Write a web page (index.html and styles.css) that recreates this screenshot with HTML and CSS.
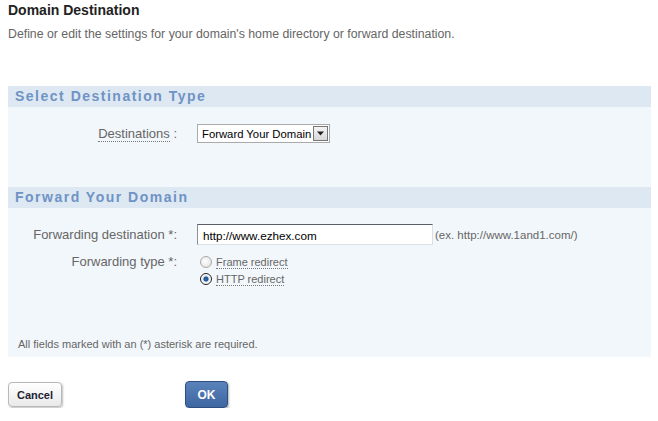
FILE: index.html
```html
<!DOCTYPE html>
<html lang="en">
<head>
    <meta charset="UTF-8">
    <title>Domain Destination</title>
    <link rel="stylesheet" href="styles.css">
</head>
<body>
    <h1 class="title">Domain Destination</h1>
    <p class="intro">Define or edit the settings for your domain's home directory or forward destination.</p>

    <div class="panel">
        <h2 class="band">Select Destination Type</h2>
        <div class="section sec-type">
            <div class="row">
                <label class="lbl"><span class="dotted">Destinations</span> :</label>
                <div class="field">
                    <span class="select">
                        <span class="select-text">Forward Your Domain</span>
                        <span class="select-btn"><svg width="9" height="5" viewBox="0 0 9 5"><path d="M1 0.5h7L4.5 4.5z" fill="#222"/></svg></span>
                    </span>
                </div>
            </div>
        </div>

        <h2 class="band">Forward Your Domain</h2>
        <div class="section sec-forward">
            <div class="row">
                <label class="lbl">Forwarding destination *:</label>
                <div class="field">
                    <input class="text" type="text" value="http://www.ezhex.com">
                    <span class="hint">(ex. http://www.1and1.com/)</span>
                </div>
            </div>
            <div class="row row-radio">
                <label class="lbl">Forwarding type *:</label>
                <div class="field radios">
                    <div class="radio"><span class="dot"></span><span class="dotted">Frame redirect</span></div>
                    <div class="radio"><span class="dot on"></span><span class="dotted">HTTP redirect</span></div>
                </div>
            </div>
        </div>
        <p class="note">All fields marked with an (*) asterisk are required.</p>
    </div>

    <div class="actions">
        <button class="btn cancel">Cancel</button>
        <button class="btn ok">OK</button>
    </div>
</body>
</html>
```

FILE: styles.css
```css
body {
    margin: 0;
    padding: 0 7px 0 8px;
    font-family: "Liberation Sans", Arial, sans-serif;
    color: #555;
    background: #fff;
}
.title {
    margin: 0;
    padding-top: 2px;
    font-size: 14px;
    line-height: 17px;
    color: #222;
}
.intro {
    margin: 8px 0 0;
    font-size: 12.3px;
    line-height: 15px;
    color: #666;
}
.panel {
    margin-top: 44px;
    background: #f2f7fb;
}
.band {
    margin: 0;
    height: 21px;
    padding-left: 7px;
    background: #dde8f2;
    font-size: 14px;
    line-height: 21px;
    font-weight: bold;
    letter-spacing: 1.5px;
    color: #6f93c4;
}
.section {
    padding-top: 17px;
}
.sec-type {
    height: 63px;
}
.sec-forward {
    padding-top: 16px;
    height: 114px;
}
.row {
    display: flex;
    align-items: center;
}
.lbl {
    width: 169px;
    text-align: right;
    font-size: 13px;
    color: #666;
}
.field {
    margin-left: 20px;
    display: flex;
    align-items: center;
}
.dotted {
    border-bottom: 1px dotted #777;
}
.select {
    display: flex;
    align-items: center;
    height: 17px;
    border: 1px solid #aaa;
    background: #fff;
    padding: 0 1px 0 4px;
    font-size: 11.3px;
    color: #000;
}
.select-text {
    margin-right: 2px;
}
.select-btn {
    width: 13px;
    height: 13px;
    border: 1px solid #777;
    background: linear-gradient(#f4f4f4, #d8d8d8);
    display: flex;
    align-items: center;
    justify-content: center;
}
.text {
    box-sizing: border-box;
    width: 236px;
    height: 21px;
    margin: 0;
    padding: 1px 5px 0;
    border: 1px solid #dcdfe3;
    border-top-color: #5a5f6a;
    border-left-color: #8a8f99;
    font-family: "Liberation Sans", Arial, sans-serif;
    font-size: 11.7px;
    color: #000;
}
.hint {
    margin-left: 2px;
    font-size: 11.5px;
    color: #666;
}
.row-radio {
    align-items: flex-start;
    margin-top: 9px;
}
.radios {
    flex-direction: column;
    align-items: flex-start;
    margin-left: 23px;
}
.radio {
    display: flex;
    align-items: center;
    height: 16px;
    margin-bottom: 1px;
    font-size: 11px;
    color: #666;
}
.dot {
    box-sizing: border-box;
    width: 12px;
    height: 12px;
    margin-right: 4px;
    border-radius: 50%;
    border: 1px solid #a8a8a8;
    background: radial-gradient(circle at 40% 40%, #fff, #ddd);
}
.dot.on {
    border-color: #222;
    background: radial-gradient(circle, #2d6fb8 0, #1b4f8f 2px, #dfe7ef 3px, #fff 5px);
}
.note {
    margin: 0;
    padding: 0 10px 6px;
    font-size: 11px;
    line-height: 13px;
    color: #666;
}
.actions {
    display: flex;
    align-items: center;
    margin-top: 24px;
}
.btn {
    font-family: "Liberation Sans", Arial, sans-serif;
    font-weight: bold;
    font-size: 11px;
    border-radius: 4px;
    cursor: pointer;
}
.cancel {
    width: 54px;
    height: 25px;
    border: 1px solid #b8b8b8;
    background: linear-gradient(#fff, #e9e9e9);
    color: #223;
    box-shadow: 1px 1px 2px rgba(0, 0, 0, 0.25);
}
.ok {
    margin-left: 123px;
    width: 43px;
    height: 27px;
    border: 1px solid #2f4f80;
    background: linear-gradient(#5a82ba, #3e67a2);
    color: #fff;
    font-size: 12px;
    box-shadow: 1px 1px 2px rgba(0, 0, 0, 0.3);
}
```
